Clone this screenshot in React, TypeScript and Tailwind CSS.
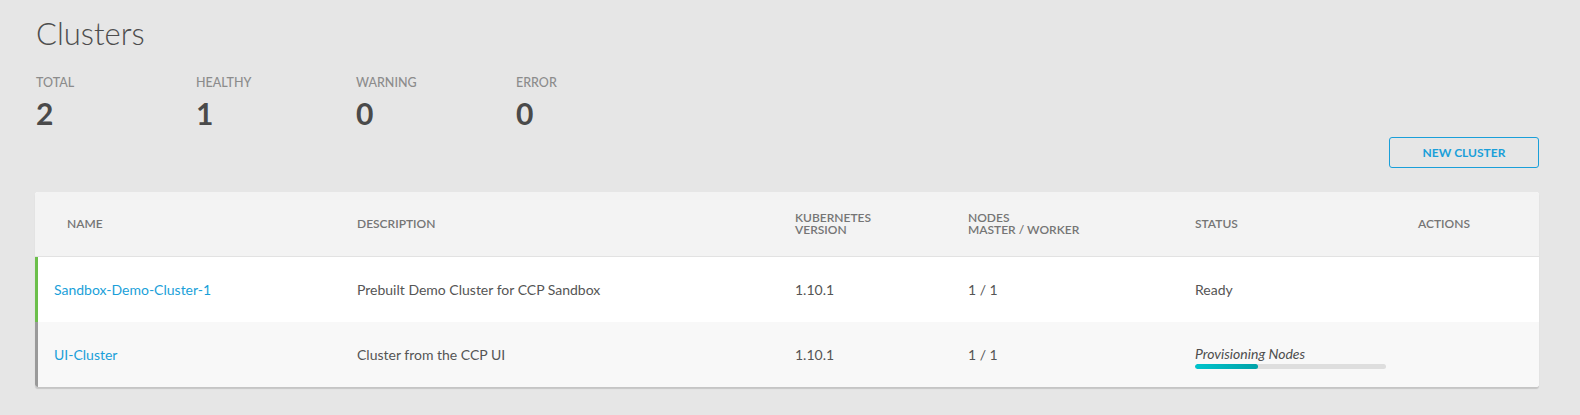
const stats = [
  { label: "TOTAL", value: 2 },
  { label: "HEALTHY", value: 1 },
  { label: "WARNING", value: 0 },
  { label: "ERROR", value: 0 },
]

const clusters = [
  {
    name: "Sandbox-Demo-Cluster-1",
    description: "Prebuilt Demo Cluster for CCP Sandbox",
    version: "1.10.1",
    nodes: "1 / 1",
    status: "Ready",
    progress: null as number | null,
  },
  {
    name: "UI-Cluster",
    description: "Cluster from the CCP UI",
    version: "1.10.1",
    nodes: "1 / 1",
    status: "Provisioning Nodes",
    progress: 33,
  },
]

function App() {
  return (
    <div className="min-h-[415px] w-full bg-[#e6e6e6] pl-[35px] pr-[41px] pt-[15px] font-['Lato',sans-serif] text-[#555]">
      <h1 className="pl-px text-[31px] leading-[36px] font-light text-[#4d4d4d]">Clusters</h1>

      <div className="mt-[25px] flex pl-px">
        {stats.map((s) => (
          <div key={s.label} className="w-[160px]">
            <div className="text-[12.5px] leading-[14px] font-medium text-[#8c8c8c]">{s.label}</div>
            <div className="mt-[5px] text-[30px] leading-[36px] font-bold text-[#4a4a4a]">{s.value}</div>
          </div>
        ))}
      </div>

      <div className="mt-[6px] flex justify-end">
        <button className="h-[31px] w-[150px] rounded-[3px] border border-[#1a9fd9] text-[12px] font-bold text-[#1a9fd9]">
          NEW CLUSTER
        </button>
      </div>

      <div className="mt-[24px] overflow-hidden rounded-[3px] bg-white shadow-[0_2px_1px_rgba(0,0,0,0.14)]">
        <div className="grid h-[65px] grid-cols-[322px_438px_173px_227px_223px_1fr] items-center border-b border-[#e2e2e2] bg-[#f3f3f3] text-[12px] leading-[12px] font-semibold text-[#757575]">
          <div className="pl-8">NAME</div>
          <div>DESCRIPTION</div>
          <div>
            KUBERNETES
            <br />
            VERSION
          </div>
          <div>
            NODES
            <br />
            MASTER / WORKER
          </div>
          <div>STATUS</div>
          <div>ACTIONS</div>
        </div>

        {clusters.map((c, i) => (
          <div
            key={c.name}
            className={
              "grid h-[65px] grid-cols-[319px_438px_173px_227px_223px_1fr] items-center border-l-[3px] text-[14px] " +
              (i === 0 ? "border-[#6cbf4b] bg-white" : "border-[#9a9a9a] bg-[#f8f8f8]")
            }
          >
            <div className="pl-4 text-[#1a9fd9]">{c.name}</div>
            <div>{c.description}</div>
            <div>{c.version}</div>
            <div>{c.nodes}</div>
            <div>
              {c.progress === null ? (
                c.status
              ) : (
                <div className="pt-[5px]">
                  <div className="leading-4 italic text-[#4d4d4d]">{c.status}</div>
                  <div className="mt-[2px] h-[5px] w-[191px] overflow-hidden rounded-sm bg-[#dedede]">
                    <div
                      className="h-full rounded-sm bg-gradient-to-r from-[#00c4cc] to-[#00a2a8]"
                      style={{ width: `${c.progress}%` }}
                    />
                  </div>
                </div>
              )}
            </div>
            <div />
          </div>
        ))}
      </div>
    </div>
  )
}

export default App
